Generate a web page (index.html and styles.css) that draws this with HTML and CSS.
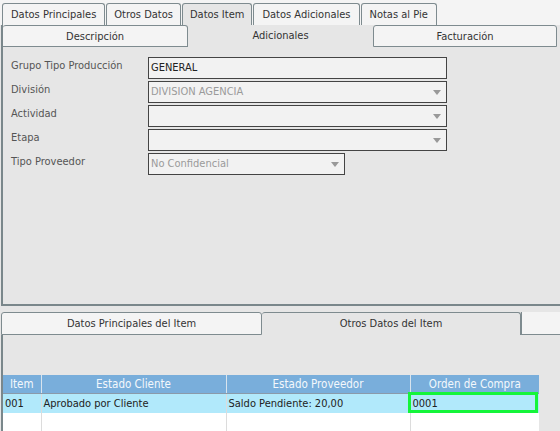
FILE: index.html
```html
<!DOCTYPE html>
<html>
<head>
<meta charset="utf-8">
<link rel="stylesheet" href="styles.css">
</head>
<body>
<div class="main-tabs">
  <div class="tab">Datos Principales</div>
  <div class="tab">Otros Datos</div>
  <div class="tab active">Datos Item</div>
  <div class="tab">Datos Adicionales</div>
  <div class="tab">Notas al Pie</div>
</div>
<div class="upper">
  <div class="sub-tabs">
    <div class="stab">Descripción</div>
    <div class="stab active">Adicionales</div>
    <div class="stab">Facturación</div>
  </div>
  <div class="form">
    <div class="row"><span class="lbl">Grupo Tipo Producción</span><div class="field wide text">GENERAL</div></div>
    <div class="row"><span class="lbl">División</span><div class="field wide disabled">DIVISION AGENCIA<span class="arrow"></span></div></div>
    <div class="row"><span class="lbl">Actividad</span><div class="field wide"><span class="arrow"></span></div></div>
    <div class="row"><span class="lbl">Etapa</span><div class="field wide"><span class="arrow"></span></div></div>
    <div class="row"><span class="lbl">Tipo Proveedor</span><div class="field narrow disabled">No Confidencial<span class="arrow"></span></div></div>
  </div>
</div>
<div class="lower">
  <div class="ltabs">
    <div class="ltab">Datos Principales del Item</div>
    <div class="ltab active">Otros Datos del Item</div>
    <div class="ltab rest"></div>
  </div>
  <div class="lpanel">
    <table class="grid">
      <thead>
        <tr><th class="c1">Item</th><th class="c2">Estado Cliente</th><th class="c3">Estado Proveedor</th><th class="c4">Orden de Compra</th></tr>
      </thead>
      <tbody>
        <tr class="sel"><td>001</td><td>Aprobado por Cliente</td><td>Saldo Pendiente: 20,00</td><td class="focus">0001</td></tr>
        <tr class="empty"><td></td><td></td><td></td><td></td></tr>
      </tbody>
    </table>
  </div>
</div>
</body>
</html>
```
FILE: styles.css
```css
* { box-sizing: border-box; }
html, body { margin: 0; padding: 0; }
body {
  width: 560px;
  height: 431px;
  overflow: hidden;
  background: #e6e6e6;
  font-family: "DejaVu Sans Condensed", "DejaVu Sans", sans-serif;
  font-size: 11px;
  color: #333;
}
.main-tabs {
  display: flex;
  height: 25px;
  padding: 3px 0 0 2px;
  background: #f4f4f4;
}
.tab {
  height: 22px;
  line-height: 21px;
  padding: 0 8px;
  border: 1px solid #7e8b8f;
  border-bottom: none;
  border-radius: 3px 3px 0 0;
  background: #f4f4f4;
  margin-right: 1px;
  color: #333;
}
.tab:nth-child(2), .tab:nth-child(3) { padding: 0 7px; }
.tab.active { background: #e6e6e6; }
.upper {
  height: 281px;
  border-left: 2px solid #7a878b;
  border-bottom: 2px solid #7a878b;
  margin-left: 1px;
  background: #e6e6e6;
}
.sub-tabs {
  display: flex;
  height: 22px;
}
.stab {
  height: 22px;
  line-height: 21px;
  text-align: center;
  border: 1px solid #7e8b8f;
  border-radius: 3px 3px 0 0;
  background: #f4f4f4;
}
.stab:nth-child(1) { width: 185px; border-left: none; }
.stab:nth-child(2) { width: 185px; border: none; background: #e6e6e6; }
.stab:nth-child(3) { width: 184px; }
.form {
  padding: 10px 0 0 8px;
  display: flex;
  flex-direction: column;
  gap: 2px;
}
.row {
  display: flex;
  align-items: flex-start;
  height: 22px;
}
.lbl {
  width: 137px;
  color: #555;
  line-height: 16px;
  padding-top: 1px;
}
.field {
  position: relative;
  height: 22px;
  border: 1px solid #444;
  background: #f2f2f2;
  line-height: 20px;
  padding-left: 2px;
  color: #222;
}
.field.wide { width: 299px; }
.field.narrow { width: 197px; }
.field.disabled { color: #9a9a9a; }
.arrow {
  position: absolute;
  right: 5px;
  top: 8px;
  width: 0;
  height: 0;
  border-left: 4px solid transparent;
  border-right: 4px solid transparent;
  border-top: 5px solid #999;
}
.lower {
  padding-top: 6px;
}
.ltabs {
  display: flex;
  height: 23px;
  padding-left: 1px;
}
.ltab {
  height: 23px;
  line-height: 22px;
  text-align: center;
  border: 1px solid #7e8b8f;
  border-radius: 3px 3px 0 0;
  background: #f4f4f4;
  color: #333;
}
.ltab:nth-child(1) { width: 261px; }
.ltab.active { width: 259px; background: #e6e6e6; border-bottom: none; border-left: none; }
.ltab.rest { flex: 1; border-radius: 0; border-top: none; border-right: none; height: 23px; }
.lpanel {
  margin-left: 1px;
  border-left: 2px solid #7a878b;
  height: 100px;
  padding-top: 40px;
}
.grid {
  border-collapse: collapse;
  table-layout: fixed;
  width: 536px;
  background: #fff;
}
.grid th {
  background: #79aedb;
  color: #f4f8fc;
  font-weight: normal;
  height: 18px;
  padding: 0;
  font-size: 11.5px;
  border-left: 1px solid #d8e4ee;
  border-bottom: 1px solid #8a9aaa;
}
.grid th:first-child { border-left: none; }
.c1 { width: 38px; }
.c2 { width: 185px; }
.c3 { width: 184px; }
.c4 { width: 129px; }
.grid td {
  height: 20px;
  padding: 0 2px;
  border-left: 1px solid #dcdcdc;
  white-space: nowrap;
  color: #222;
}
.grid td:first-child { border-left: none; }
.grid tr.sel td { background: #b1e9fb; }
.grid tr.empty td { height: 20px; background: #fff; }
.grid td.focus { position: relative; }
.grid td.focus::after {
  content: "";
  position: absolute;
  left: -3px;
  right: 1px;
  top: -2px;
  bottom: 0;
  border: 3px solid #14f53a;
}
```
